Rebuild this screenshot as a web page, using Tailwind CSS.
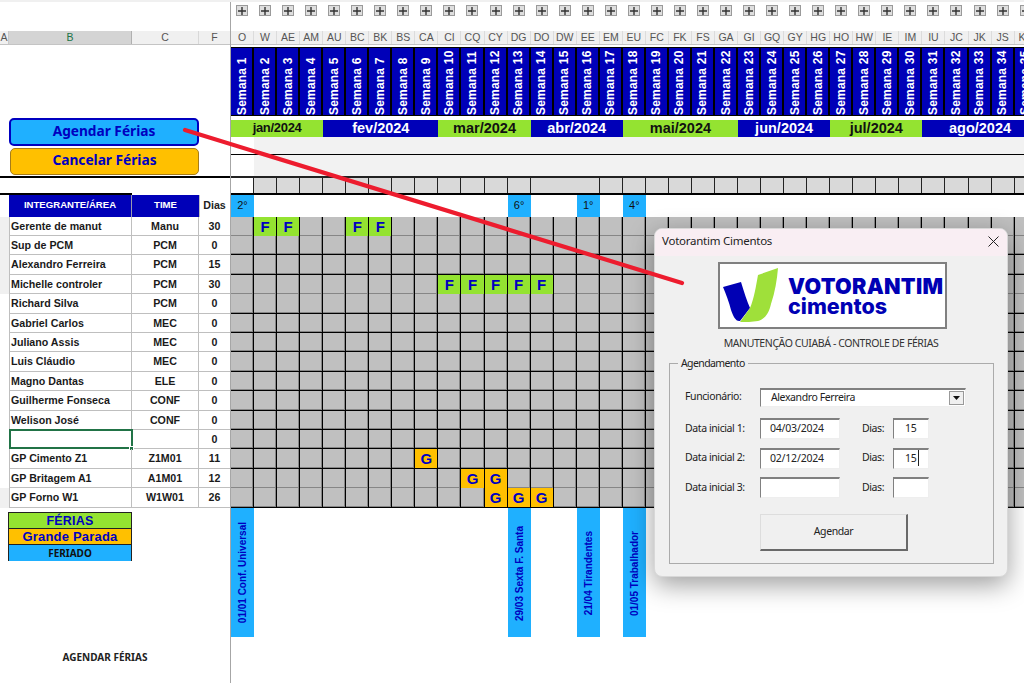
<!DOCTYPE html>
<html lang="en">
  <head>
    <meta charset="UTF-8" />
    <title>Agendar Férias</title>
    <script src="https://cdn.jsdelivr.net/npm/@tailwindcss/browser@4"></script>
  </head>
  <body class="bg-white">
    <div class="relative w-[1024px] h-[683px] overflow-hidden bg-white font-['Liberation_Sans',Arial,sans-serif]">
      <div class="h-[2px] bg-[#f0f0f0]"></div>
      <div class="flex">
        <!-- left pane -->
        <div class="w-[231px] shrink-0 h-[681px] border-r border-[#a6a6a6]">
          <div class="h-[29px]"></div>
          <div class="h-[13px] flex bg-[#f0f0f0] text-[10.5px] leading-[13px] text-[#555] text-center">
            <div class="w-[9px] border-r border-[#c8c8c8]">A</div>
            <div class="w-[123px] bg-[#d4d4d4] text-[#217346] border-r border-[#b0b0b0]">B</div>
            <div class="w-[67px] border-r border-[#d8d8d8]">C</div>
            <div class="w-[31px]">F</div>
          </div>
          <div class="h-[132px] flex flex-col justify-end gap-[2px] pb-[1px] pl-[9px] border-t border-[#c4c4c4] font-['Noto_Sans',sans-serif] font-bold text-[13.7px] text-[#0000c0]">
            <div class="w-[190px] h-[28px] flex items-center justify-center pb-[1px] rounded-[5px] bg-[#1fb0ff] border-2 border-[#0000c0]">Agendar Férias</div>
            <div class="ml-[1px] w-[189px] h-[27px] flex items-center justify-center pb-[2px] rounded-[5px] bg-[#ffc000] border border-[#a67c1a]">Cancelar Férias</div>
          </div>
          <div class="h-[2px] w-full bg-black"></div>
          <div class="h-[17px]"><div class="w-[132px] h-full border-b-2 border-black"></div></div>
          <div class="h-[21.7px] flex text-[9.6px] font-bold text-center leading-[20px]">
            <div class="w-[9px]"></div>
            <div class="w-[123px] bg-[#0000b8] text-white border-r border-[#9a9ab0]">INTEGRANTE/ÁREA</div>
            <div class="w-[67px] bg-[#0000b8] text-white">TIME</div>
            <div class="w-[30px] text-[10.67px] text-[#222] border-l border-[#bfbfbf]">Dias</div>
          </div>
          <div id="people"></div>
          <div class="ml-[8px] mt-[4px] w-[124px] border-x border-[#222] text-center font-bold text-[#0000c0]">
            <div class="h-[17px] bg-[#94e331] border-y border-[#222] text-[12.5px] leading-[16px] tracking-[0.2px]">FÉRIAS</div>
            <div class="h-[16px] bg-[#ffc000] border-b border-[#222] text-[13px] leading-[16px] tracking-[0.2px]">Grande Parada</div>
            <div class="h-[16px] bg-[#1fb0ff] text-[10px] leading-[17px] text-[#111] font-['Noto_Sans',sans-serif]">FERIADO</div>
          </div>
          <div class="mt-[89px] w-[210px] text-center text-[10px] font-bold text-[#222] font-['Noto_Sans',sans-serif]">AGENDAR FÉRIAS</div>
        </div>

        <!-- right pane -->
        <div class="flex-1 overflow-hidden">
          <div id="plus" class="grid grid-cols-[repeat(35,23.05px)] h-[29px]"></div>
          <div id="cols" class="grid grid-cols-[repeat(35,23.05px)] h-[13px] bg-[#f0f0f0] text-[10.5px] leading-[13px] text-[#555] text-center"></div>
          <div class="h-[3px] border-t border-[#c4c4c4]"></div>
          <div id="weeks" class="grid grid-cols-[repeat(35,23.05px)] h-[69px] border-y border-black bg-black"></div>
          <div class="h-[4px]"></div>
          <div id="months" class="grid grid-cols-[repeat(35,23.05px)] h-[17px] border-b border-black text-[14.5px] font-bold leading-[17px] text-center"></div>
          <div class="flex h-[18px] border-b border-black">
            <div class="w-[23px] bg-white"></div>
            <div class="flex-1 bg-[#f2f2f2]"></div>
          </div>
          <div class="flex h-[23px] border-b-2 border-[#222]">
            <div class="w-[23px] bg-white"></div>
            <div class="flex-1 bg-[#f2f2f2]"></div>
          </div>
          <div id="marks" class="grid grid-cols-[repeat(35,23.05px)] h-[17px] border-b-2 border-black"></div>
          <div id="feriados" class="grid grid-cols-[repeat(35,23.05px)] h-[21.7px] text-[11px] leading-[21px] text-center text-[#111]"></div>
          <div id="grid"></div>
          <div id="bands" class="grid grid-cols-[repeat(35,23.05px)] h-[129px]"></div>
        </div>
      </div>

      <!-- seta -->
      <svg class="absolute left-0 top-0 z-20 pointer-events-none" width="1024" height="683" viewBox="0 0 1024 683">
        <line x1="185" y1="130" x2="682" y2="283" stroke="#ed1c2e" stroke-width="4.2" stroke-linecap="round" />
      </svg>

      <!-- userform -->
      <div class="absolute left-[654px] top-[228px] z-10 w-[354px] h-[349px] rounded-[8px] bg-[#f0f0f0] border border-[#d8d8d8] shadow-[0_8px_26px_rgba(0,0,0,0.38)] overflow-hidden font-['Noto_Sans',sans-serif] text-[10.5px] tracking-[-0.4px] text-[#222]">
        <div class="h-[27px] bg-[#f9eef3] flex items-center justify-between pl-[7px] pr-[7px] pb-[3px]">
          <span class="text-[11.5px] tracking-[-0.25px] text-[#222]">Votorantim Cimentos</span>
          <svg width="13" height="13" viewBox="0 0 13 13"><path d="M1.5 1.5 L11.5 11.5 M11.5 1.5 L1.5 11.5" stroke="#222" stroke-width="1" fill="none" /></svg>
        </div>
        <div class="ml-[63px] mt-[6px] w-[229px] h-[67px] border-2 border-[#808080] bg-white flex items-center relative">
          <svg class="absolute left-0 top-0" width="225" height="63" viewBox="0 0 225 63">
            <path d="M3 23 L21 18 C24 28 27 37 30 44 L20 57 C16 58 13 52 11 46 C9 38 6 30 3 23 Z" fill="#0000b4" />
            <path d="M38 11 L58 4 C57 16 55 28 51 40 C49 49 45 55 38 57 C32 58 26 58 20 58 L30 44 C34 35 36 22 38 11 Z" fill="#9fe03a" />
          </svg>
          <div class="ml-[68px] text-[#0000b4] font-['Inter',sans-serif] font-black tracking-[0.3px]">
            <div class="text-[21.5px] leading-[20px]">VOTORANTIM</div>
            <div class="text-[21.5px] leading-[20px] font-extrabold tracking-normal">cimentos</div>
          </div>
        </div>
        <div class="text-center mt-[7px] leading-[14px] text-[#333]">MANUTENÇÃO CUIABÁ - CONTROLE DE FÉRIAS</div>
        <fieldset class="ml-[14px] mt-[6px] w-[325px] h-[208px] border border-[#ababab]">
          <legend class="ml-[8px] px-[3px] leading-[14px] tracking-[-0.6px]">Agendamento</legend>
          <div class="mt-[18px] pl-[15px] flex items-center h-[18px]">
            <span class="w-[75px]">Funcionário:</span>
            <div class="w-[206px] h-[19px] flex items-center justify-between bg-white border-t-2 border-l border-[#808080] border-r border-r-[#eee] border-b border-b-[#eee] pl-[10px] pr-[1px]">
              <span>Alexandro Ferreira</span>
              <span class="w-[15px] h-[14px] bg-[#f0f0f0] border border-[#999] flex items-center justify-center">
                <svg width="7" height="4" viewBox="0 0 7 4"><path d="M0 0 H7 L3.5 4 Z" fill="#111" /></svg>
              </span>
            </div>
          </div>
          <div id="dates" class="mt-[12px] pl-[15px] flex flex-col gap-[8.5px]"></div>
          <div class="ml-[90px] mt-[16px] w-[148px] h-[37px] flex items-center justify-center border border-t-[#ddd] border-l-[#ddd] border-r-2 border-b-2 border-r-[#696969] border-b-[#696969] bg-[#f0f0f0]">Agendar</div>
        </fieldset>
      </div>
    </div>

    <script>
      const cols = ["O","W","AE","AM","AU","BC","BK","BS","CA","CI","CQ","CY","DG","DO","DW","EE","EM","EU","FC","FK","FS","GA","GI","GQ","GY","HG","HO","HW","IE","IM","IU","JC","JK","JS","KA"];

      document.getElementById("plus").innerHTML = cols.map(() => `
        <div class="pl-[5px] pt-[3px]">
          <div class="w-[12px] h-[11px] bg-[#dedede] border border-[#9a9a9a] flex items-center justify-center">
            <svg width="8" height="8" viewBox="0 0 8 8"><path d="M4 0 V8 M0 4 H8" stroke="#333" stroke-width="1.4" fill="none" /></svg>
          </div>
        </div>`).join("");

      document.getElementById("cols").innerHTML = cols.map((c) => `<div class="border-r border-[#dcdcdc]">${c}</div>`).join("");

      document.getElementById("weeks").innerHTML = cols.map((c, i) => `
        <div class="bg-[#0000b8] border-r-2 border-black flex items-center justify-center pt-[6px]">
          <span class="[writing-mode:vertical-rl] rotate-180 text-white font-bold text-[12px] tracking-[0.2px] whitespace-nowrap text-left h-[60px]">Semana ${i + 1}</span>
        </div>`).join("");

      const months = [
        ["jan/2024", "col-span-4", "bg-[#94e331] text-[#111] text-[13px] tracking-[-0.3px] leading-[15px]"],
        ["fev/2024", "col-span-5", "bg-[#0000b8] text-white"],
        ["mar/2024", "col-span-4", "bg-[#94e331] text-[#111]"],
        ["abr/2024", "col-span-4", "bg-[#0000b8] text-white"],
        ["mai/2024", "col-span-5", "bg-[#94e331] text-[#111]"],
        ["jun/2024", "col-span-4", "bg-[#0000b8] text-white"],
        ["jul/2024", "col-span-4", "bg-[#94e331] text-[#111]"],
        ["ago/2024", "col-span-5", "bg-[#0000b8] text-white"],
      ];
      document.getElementById("months").innerHTML = months.map((m) => `<div class="${m[1]} ${m[2]}">${m[0]}</div>`).join("");

      document.getElementById("marks").innerHTML = cols.map((c, i) => {
        if (i === 0) return `<div class="bg-white border-r border-[#222]"></div>`;
        if (i === 13) return `<div class="col-span-3 bg-[#d9d9d9] border-r border-[#222]"></div>`;
        if (i === 14 || i === 15) return "";
        return `<div class="bg-[#d9d9d9] border-r border-[#222]"></div>`;
      }).join("");

      const holidayNums = { 0: "2°", 12: "6°", 15: "1°", 17: "4°" };
      document.getElementById("feriados").innerHTML = cols.map((c, i) =>
        holidayNums[i] ? `<div class="bg-[#1fb0ff]">${holidayNums[i]}</div>` : `<div></div>`
      ).join("");

      const people = [
        ["Gerente de manut", "Manu", "30"],
        ["Sup de PCM", "PCM", "0"],
        ["Alexandro Ferreira", "PCM", "15"],
        ["Michelle controler", "PCM", "30"],
        ["Richard Silva", "PCM", "0"],
        ["Gabriel Carlos", "MEC", "0"],
        ["Juliano Assis", "MEC", "0"],
        ["Luis Cláudio", "MEC", "0"],
        ["Magno Dantas", "ELE", "0"],
        ["Guilherme Fonseca", "CONF", "0"],
        ["Welison José", "CONF", "0"],
        ["", "", "0"],
        ["GP Cimento Z1", "Z1M01", "11"],
        ["GP Britagem A1", "A1M01", "12"],
        ["GP Forno W1", "W1W01", "26"],
      ];
      document.getElementById("people").innerHTML = people.map((p, i) => `
        <div class="flex h-[19.4px] text-[10.67px] font-bold leading-[18px] text-[#1a1a1a]">
          <div class="w-[9px] ${i < 4 || i === 14 ? "bg-[#f0f0f0]" : "bg-white"}"></div>
          <div class="relative w-[123px] pl-[1px] border-r border-b border-l border-[#bfbfbf] whitespace-nowrap">
            ${p[0]}
            ${i === 11 ? `<div class="absolute -left-[1px] -top-[1px] w-[124px] h-[20px] border-2 border-[#217346]"></div><div class="absolute -right-[3px] -bottom-[3px] w-[5px] h-[5px] bg-[#217346] border border-white"></div>` : ""}
          </div>
          <div class="w-[67px] text-center border-r border-b border-[#bfbfbf]">${p[1]}</div>
          <div class="w-[31px] text-center border-b border-[#bfbfbf]">${p[2]}</div>
        </div>`).join("");

      const marks = {
        0: { 1: "F", 2: "F", 5: "F", 6: "F" },
        3: { 9: "F", 10: "F", 11: "F", 12: "F", 13: "F" },
        12: { 8: "G" },
        13: { 10: "G", 11: "G" },
        14: { 11: "G", 12: "G", 13: "G" },
      };
      document.getElementById("grid").innerHTML = people.map((p, r) => `
        <div class="grid grid-cols-[repeat(35,23.05px)] h-[19.4px]">
          ${cols.map((c, i) => {
            const m = marks[r] && marks[r][i];
            if (m === "F") return `<div class="bg-[#94e331] border-r border-b border-black text-center text-[15px] leading-[19px] font-bold text-[#0000c0]">F</div>`;
            if (m === "G") return `<div class="bg-[#ffc000] border-r border-b border-black text-center text-[15px] leading-[19px] font-bold text-[#0000c0]">G</div>`;
            return `<div class="bg-[#c0c0c0] border-r border-b border-black shadow-[inset_-1px_-1px_0_#868686]"></div>`;
          }).join("")}
        </div>`).join("");

      const bands = { 0: "01/01 Conf. Universal", 12: "29/03 Sexta F. Santa", 15: "21/04 Tirandentes", 17: "01/05 Trabalhador" };
      document.getElementById("bands").innerHTML = cols.map((c, i) => bands[i] ? `
        <div class="bg-[#1fb0ff] flex items-center justify-center pt-[2px]">
          <span class="[writing-mode:vertical-rl] rotate-180 text-[10px] font-bold text-[#0000c0] whitespace-nowrap">${bands[i]}</span>
        </div>` : `<div></div>`).join("");

      const dates = [["1", "04/03/2024", "15", ""], ["2", "02/12/2024", "15", "border-r border-[#222] pr-[1px]"], ["3", "", "", ""]];
      document.getElementById("dates").innerHTML = dates.map((d) => `
        <div class="flex items-center h-[21px]">
          <span class="w-[75px]">Data inicial ${d[0]}:</span>
          <div class="w-[80px] h-[21px] bg-white border-t-2 border-l border-[#808080] border-r border-r-[#eee] border-b border-b-[#eee] pl-[9px] leading-[17px] tracking-[-0.2px]">${d[1]}</div>
          <span class="ml-[22px] w-[31px]">Dias:</span>
          <div class="w-[36px] h-[21px] bg-white border-t-2 border-l border-[#808080] border-r border-r-[#eee] border-b border-b-[#eee] pl-[11px] leading-[17px] flex items-start tracking-[-0.2px]"><span class="h-[16px] ${d[3]}">${d[2]}</span></div>
        </div>`).join("");
    </script>
  </body>
</html>
